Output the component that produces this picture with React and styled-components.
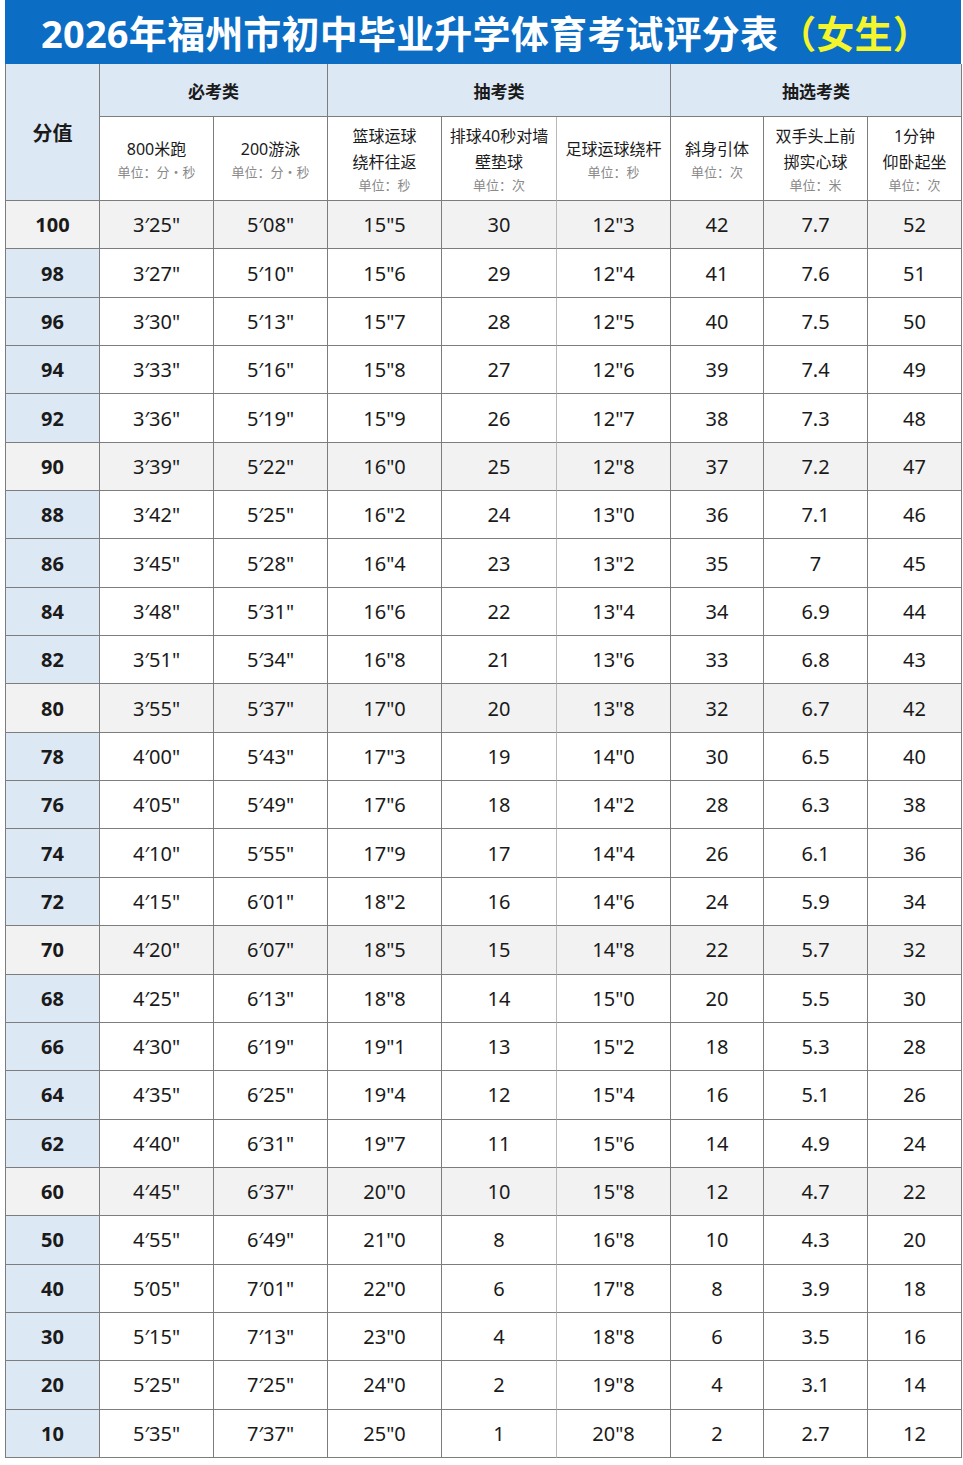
import React from 'react';
import styled, { createGlobalStyle } from 'styled-components';

const GlobalStyle = createGlobalStyle`
    body {
        margin: 0;
        background: #ffffff;
        font-family: "Noto Sans", "Noto Sans CJK SC", sans-serif;
    }
`

const Page = styled.div`
    width: 956px;
    margin: 0 0 0 5px;
`

const TitleBar = styled.div`
    background-color: #0b6dc4;
    color: #ffffff;
    height: 64px;
    display: flex;
    align-items: center;
    justify-content: center;
    font-family: "Noto Sans", "Noto Sans CJK SC", sans-serif;
    font-size: 38px;
    font-weight: 700;
    letter-spacing: 0.2px;
    box-sizing: border-box;
    padding: 0 0 2px 6px;
`

const Yellow = styled.span`
    color: #f4f52a;
`

const Table = styled.table`
    border-collapse: separate;
    border-spacing: 0;
    table-layout: fixed;
    width: 956px;
    border-left: 1px solid #7d7d7d;
`

const Cell = styled.td`
    border-right: 1px solid ${props => (props.$soft ? '#b9b9b9' : '#7d7d7d')};
    border-bottom: 1px solid #7d7d7d;
    text-align: center;
    vertical-align: middle;
    padding: 0;
    color: #1a1a1a;
    background-color: ${props => props.$bg || '#ffffff'};
`

const GroupCell = styled(Cell).attrs({ as: 'th' })`
    background-color: #dde8f5;
    height: 51px;
    font-family: "Noto Sans CJK SC", sans-serif;
    font-size: 17px;
    font-weight: 700;
    padding-top: 1px;
`

const ScoreHead = styled(Cell).attrs({ as: 'th' })`
    background-color: #dde8f5;
    font-family: "Noto Sans CJK SC", sans-serif;
    font-size: 20px;
    font-weight: 700;
    vertical-align: top;
    padding-top: 54px;
`

const ItemCell = styled(Cell).attrs({ as: 'th' })`
    height: 83px;
    font-weight: 400;
    padding: 0;
`

const ItemName = styled.div`
    font-family: "Noto Sans", "Noto Sans CJK SC", sans-serif;
    font-size: 16px;
    line-height: 26px;
    color: #1a1a1a;
    white-space: nowrap;
`

const Unit = styled.div`
    font-family: "Noto Sans CJK SC", sans-serif;
    font-size: 13px;
    line-height: 20px;
    color: #8a8a8a;
`

const Row = styled.tr`
    height: 48.35px;
`

const Value = styled(Cell)`
    font-size: 20px;
    height: 47.35px;
`

const Score = styled(Value)`
    font-weight: 700;
`

const items = [
    { name: ['800米跑'], unit: '单位：分·秒' },
    { name: ['200游泳'], unit: '单位：分·秒' },
    { name: ['篮球运球', '绕杆往返'], unit: '单位：秒' },
    { name: ['排球40秒对墙', '壁垫球'], unit: '单位：次' },
    { name: ['足球运球绕杆'], unit: '单位：秒' },
    { name: ['斜身引体'], unit: '单位：次' },
    { name: ['双手头上前', '掷实心球'], unit: '单位：米' },
    { name: ['1分钟', '仰卧起坐'], unit: '单位：次' },
]

const rows = [
    [100, "3′25\"", "5′08\"", '15"5', 30, '12"3', 42, '7.7', 52],
    [98, "3′27\"", "5′10\"", '15"6', 29, '12"4', 41, '7.6', 51],
    [96, "3′30\"", "5′13\"", '15"7', 28, '12"5', 40, '7.5', 50],
    [94, "3′33\"", "5′16\"", '15"8', 27, '12"6', 39, '7.4', 49],
    [92, "3′36\"", "5′19\"", '15"9', 26, '12"7', 38, '7.3', 48],
    [90, "3′39\"", "5′22\"", '16"0', 25, '12"8', 37, '7.2', 47],
    [88, "3′42\"", "5′25\"", '16"2', 24, '13"0', 36, '7.1', 46],
    [86, "3′45\"", "5′28\"", '16"4', 23, '13"2', 35, '7', 45],
    [84, "3′48\"", "5′31\"", '16"6', 22, '13"4', 34, '6.9', 44],
    [82, "3′51\"", "5′34\"", '16"8', 21, '13"6', 33, '6.8', 43],
    [80, "3′55\"", "5′37\"", '17"0', 20, '13"8', 32, '6.7', 42],
    [78, "4′00\"", "5′43\"", '17"3', 19, '14"0', 30, '6.5', 40],
    [76, "4′05\"", "5′49\"", '17"6', 18, '14"2', 28, '6.3', 38],
    [74, "4′10\"", "5′55\"", '17"9', 17, '14"4', 26, '6.1', 36],
    [72, "4′15\"", "6′01\"", '18"2', 16, '14"6', 24, '5.9', 34],
    [70, "4′20\"", "6′07\"", '18"5', 15, '14"8', 22, '5.7', 32],
    [68, "4′25\"", "6′13\"", '18"8', 14, '15"0', 20, '5.5', 30],
    [66, "4′30\"", "6′19\"", '19"1', 13, '15"2', 18, '5.3', 28],
    [64, "4′35\"", "6′25\"", '19"4', 12, '15"4', 16, '5.1', 26],
    [62, "4′40\"", "6′31\"", '19"7', 11, '15"6', 14, '4.9', 24],
    [60, "4′45\"", "6′37\"", '20"0', 10, '15"8', 12, '4.7', 22],
    [50, "4′55\"", "6′49\"", '21"0', 8, '16"8', 10, '4.3', 20],
    [40, "5′05\"", "7′01\"", '22"0', 6, '17"8', 8, '3.9', 18],
    [30, "5′15\"", "7′13\"", '23"0', 4, '18"8', 6, '3.5', 16],
    [20, "5′25\"", "7′25\"", '24"0', 2, '19"8', 4, '3.1', 14],
    [10, "5′35\"", "7′37\"", '25"0', 1, '20"8', 2, '2.7', 12],
]

const widths = [94, 114, 114, 114, 115, 114, 93, 104, 94]
const highlighted = [100, 90, 80, 70, 60]

const App = () => (
    <Page>
        <GlobalStyle />
        <TitleBar>
            2026年福州市初中毕业升学体育考试评分表<Yellow>（女生）</Yellow>
        </TitleBar>
        <Table>
            <colgroup>
                {widths.map((w, i) => <col key={i} style={{ width: w }} />)}
            </colgroup>
            <thead>
                <tr>
                    <ScoreHead rowSpan={2}>分值</ScoreHead>
                    <GroupCell colSpan={2}>必考类</GroupCell>
                    <GroupCell colSpan={3}>抽考类</GroupCell>
                    <GroupCell colSpan={3}>抽选考类</GroupCell>
                </tr>
                <tr>
                    {items.map((item, i) => (
                        <ItemCell key={i} $soft={i === 3}>
                            {item.name.map(line => <ItemName key={line}>{line}</ItemName>)}
                            <Unit>{item.unit}</Unit>
                        </ItemCell>
                    ))}
                </tr>
            </thead>
            <tbody>
                {rows.map(row => {
                    const grey = highlighted.includes(row[0]) ? '#f2f2f2' : null
                    return (
                        <Row key={row[0]}>
                            <Score $bg={grey || '#dde8f5'}>{row[0]}</Score>
                            {row.slice(1).map((v, i) => (
                                <Value key={i} $bg={grey} $soft={i === 3}>{v}</Value>
                            ))}
                        </Row>
                    )
                })}
            </tbody>
        </Table>
    </Page>
);

export default App;
